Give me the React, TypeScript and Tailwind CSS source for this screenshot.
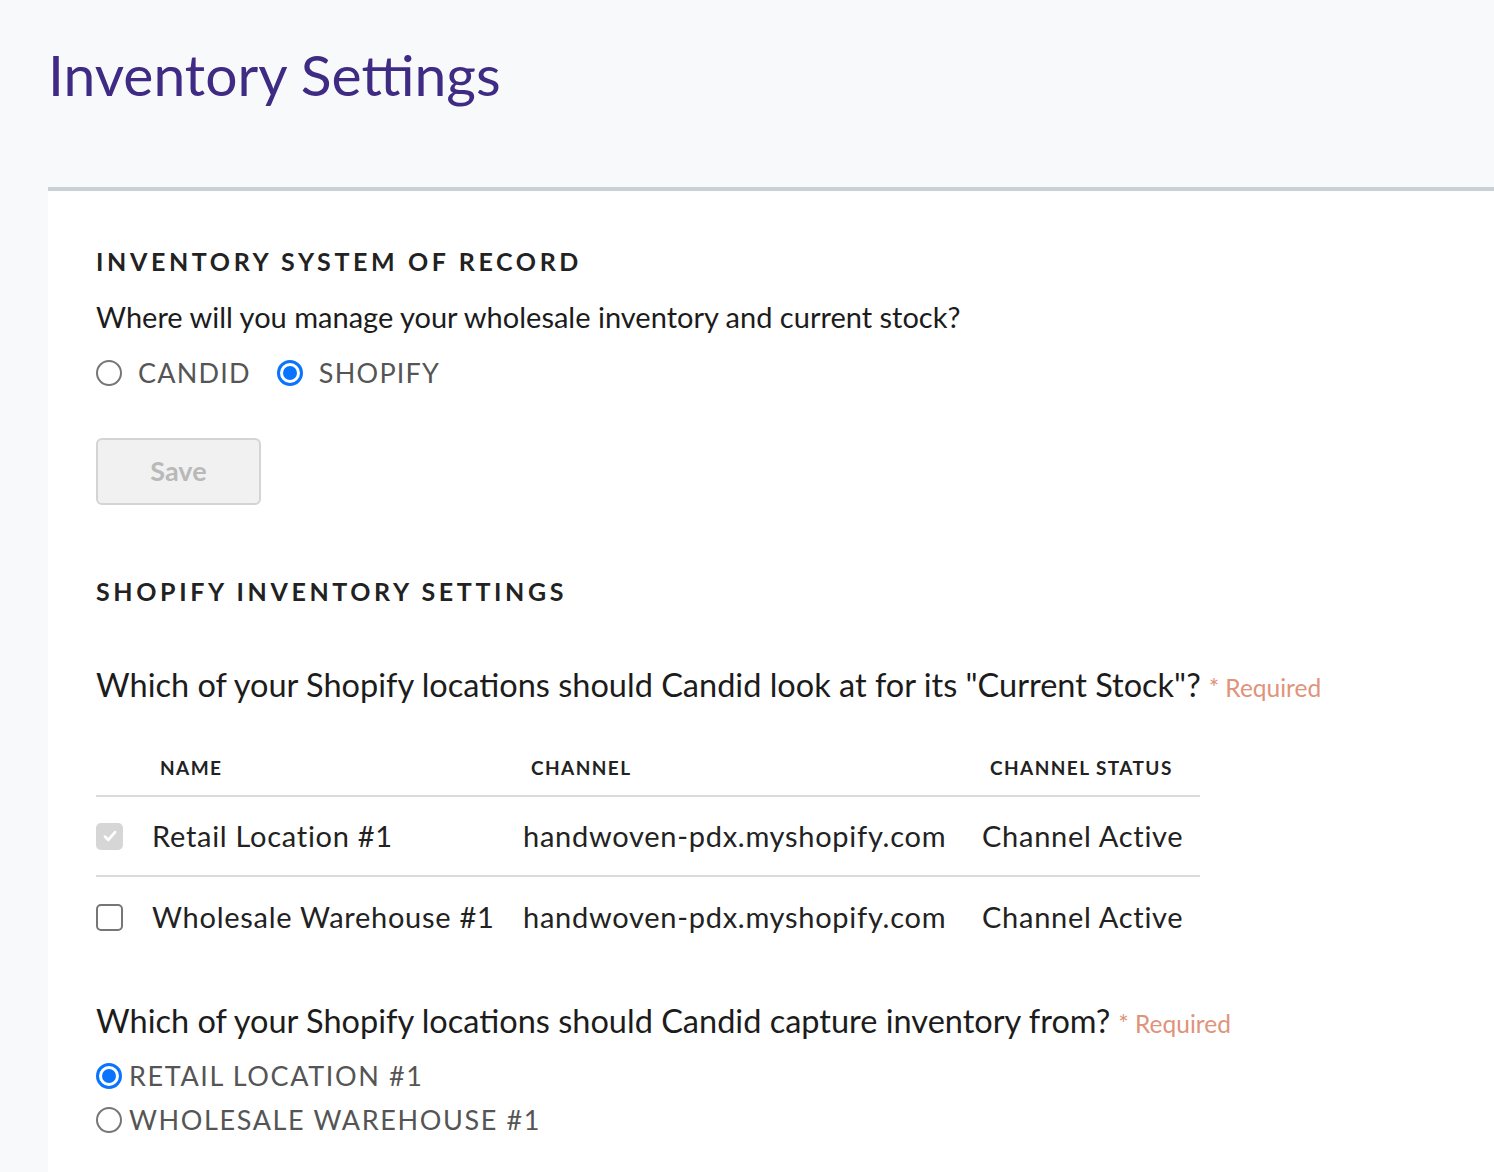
import React from 'react';

const font = { fontFamily: 'Lato, "Noto Sans", sans-serif' };

function Radio({ checked }: { checked?: boolean }) {
  if (checked) {
    return (
      <span className="flex h-[26px] w-[26px] shrink-0 items-center justify-center rounded-full border-[3px] border-[#0a74ff] bg-white">
        <span className="h-[14px] w-[14px] rounded-full bg-[#0a74ff]" />
      </span>
    );
  }
  return <span className="h-[26px] w-[26px] shrink-0 rounded-full border-2 border-[#767676] bg-white" />;
}

function Check({ checked }: { checked?: boolean }) {
  if (checked) {
    return (
      <span className="flex h-[27px] w-[27px] items-center justify-center rounded-[5px] bg-[#d6d6d6]">
        <svg viewBox="0 0 16 16" className="h-[18px] w-[18px]" fill="none" stroke="#fff" strokeWidth="2.4" strokeLinecap="round" strokeLinejoin="round">
          <path d="M3.5 8.5l3 3 6-7" />
        </svg>
      </span>
    );
  }
  return <span className="h-[27px] w-[27px] rounded-[5px] border-2 border-[#767676] bg-white" />;
}

const rows = [
  { name: 'Retail Location #1', channel: 'handwoven-pdx.myshopify.com', status: 'Channel Active', checked: true },
  { name: 'Wholesale Warehouse #1', channel: 'handwoven-pdx.myshopify.com', status: 'Channel Active', checked: false },
];

export default function App() {
  return (
    <div className="min-h-screen bg-[#f8f9fb] pl-12" style={font}>
      {/* Page title */}
      <div className="h-[187px] pt-[38px]">
        <h1 className="text-[57px] leading-[72px] font-normal text-[#3f2b84]">Inventory Settings</h1>
      </div>

      <div className="min-h-[985px] border-t-4 border-[#c9d1d6] bg-white px-12 pt-[54px] text-[#1c1c1c]">
        <h2 className="text-[25px] leading-[32px] font-bold tracking-[0.145em] text-[#222]">INVENTORY SYSTEM OF RECORD</h2>
        <p className="mt-[21px] text-[29px] leading-[38px]">Where will you manage your wholesale inventory and current stock?</p>

        <div className="mt-[19px] flex h-[36px] items-center">
          <label className="flex items-center gap-4">
            <Radio />
            <span className="text-[27px] tracking-[0.045em] text-[#555]">CANDID</span>
          </label>
          <label className="ml-[26px] flex items-center gap-4">
            <Radio checked />
            <span className="text-[27px] tracking-[0.045em] text-[#555]">SHOPIFY</span>
          </label>
        </div>

        <button className="mt-[47px] h-[67px] w-[165px] rounded-[6px] border-2 border-[#d4d4d4] bg-[#f1f1f1] text-[27px] font-bold text-[#b9b9b9]">
          Save
        </button>

        <h2 className="mt-[70px] text-[25px] leading-[32px] font-bold tracking-[0.145em] text-[#222]">SHOPIFY INVENTORY SETTINGS</h2>

        <p className="mt-[57px] flex items-baseline text-[32.5px] leading-[42px]">
          Which of your Shopify locations should Candid look at for its "Current Stock"?
          <span className="ml-2 text-[24.5px] text-[#e0937b]">* Required</span>
        </p>

        {/* Locations table */}
        <div className="mt-[32px] w-[1104px]">
          <div className="grid h-[56px] grid-cols-[56px_371px_459px_218px] items-center border-b-2 border-[#dadada] text-[19px] font-bold tracking-[0.075em] text-[#222]">
            <span />
            <span className="pl-2">NAME</span>
            <span className="pl-2">CHANNEL</span>
            <span className="pl-2">CHANNEL STATUS</span>
          </div>
          {rows.map((r, i) => (
            <div
              key={r.name}
              className={
                'grid h-[80px] grid-cols-[56px_371px_459px_218px] items-center text-[29px] tracking-[0.025em] text-[#222] ' +
                (i === 0 ? 'border-b-2 border-[#dadada]' : '')
              }
            >
              <Check checked={r.checked} />
              <span className="whitespace-nowrap">{r.name}</span>
              <span className="whitespace-nowrap">{r.channel}</span>
              <span className="whitespace-nowrap">{r.status}</span>
            </div>
          ))}
        </div>

        <p className="mt-[43px] flex items-baseline text-[32.5px] leading-[42px]">
          Which of your Shopify locations should Candid capture inventory from?
          <span className="ml-2 text-[24.5px] text-[#e0937b]">* Required</span>
        </p>

        <div className="mt-[9px]">
          <label className="flex h-[44px] items-center gap-[7px]">
            <Radio checked />
            <span className="text-[27px] tracking-[0.06em] text-[#555]">RETAIL LOCATION #1</span>
          </label>
          <label className="flex h-[44px] items-center gap-[7px]">
            <Radio />
            <span className="text-[27px] tracking-[0.06em] text-[#555]">WHOLESALE WAREHOUSE #1</span>
          </label>
        </div>
      </div>
    </div>
  );
}
